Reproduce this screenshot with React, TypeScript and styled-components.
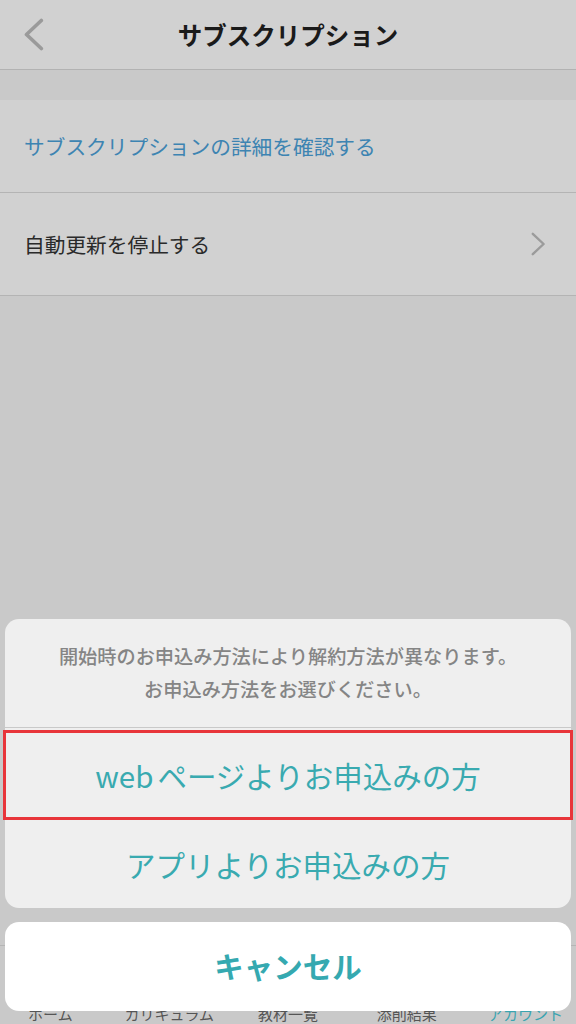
import React from "react";
import styled, { createGlobalStyle } from "styled-components";

const GlobalStyle = createGlobalStyle`
  html, body {
    margin: 0;
    padding: 0;
    background: #c9c9c9;
  }
  body {
    font-family: "Noto Sans CJK JP", "Noto Sans", sans-serif;
  }
  * {
    box-sizing: border-box;
  }
`;

const Screen = styled.div`
  position: relative;
  width: 576px;
  height: 1024px;
  overflow: hidden;
  display: flex;
  flex-direction: column;
  background: #c9c9c9;
`;

const Header = styled.header`
  height: 70px;
  display: grid;
  grid-template-columns: 70px 1fr 70px;
  align-items: center;
  background: #d1d1d1;
  border-bottom: 1px solid #b2b2b2;
`;

const BackButton = styled.div`
  display: flex;
  align-items: center;
  padding-left: 24px;
  color: #9c9c9c;
`;

const Title = styled.h1`
  margin: 0;
  text-align: center;
  font-size: 24.5px;
  font-weight: 700;
  color: #1a1a1a;
`;

const List = styled.div`
  margin-top: 30px;
  background: #d1d1d1;
`;

const Row = styled.div<{ $h: number }>`
  height: ${(p) => p.$h}px;
  display: flex;
  align-items: center;
  justify-content: space-between;
  padding: 0 31px 0 24px;
  border-bottom: 1px solid #b4b4b4;
`;

const RowText = styled.span<{ $link?: boolean }>`
  font-size: 20.7px;
  color: ${(p) => (p.$link ? "#3d84b2" : "#2a2a2a")};
`;

const Filler = styled.div`
  flex: 1;
`;

const TabBar = styled.nav`
  height: 79px;
  border-top: 1px solid #b5b5b5;
  display: grid;
  grid-template-columns: repeat(5, 1fr);
  margin: 0 -9px;
  align-items: end;
`;

const TabLabel = styled.span<{ $active?: boolean }>`
  text-align: center;
  font-size: 15px;
  line-height: 20px;
  color: ${(p) => (p.$active ? "#3aa4b0" : "#555")};
`;

const Sheet = styled.div`
  position: absolute;
  left: 5px;
  right: 5px;
  bottom: 13px;
  display: flex;
  flex-direction: column;
  gap: 14px;
`;

const Group = styled.div`
  background: #efefef;
  border-radius: 14px;
`;

const Message = styled.div`
  padding: 21px 10px 21px;
  text-align: center;
  font-size: 19.2px;
  font-weight: 500;
  line-height: 33px;
  color: #858585;
  border-bottom: 1px solid #c9c9c9;
`;

const Option = styled.div<{ $selected?: boolean; $h: number }>`
  height: ${(p) => p.$h}px;
  display: flex;
  align-items: center;
  justify-content: center;
  font-size: 29.5px;
  color: #39aab0;
  ${(p) =>
    p.$selected &&
    `
    margin: 2px -2px 0 -2px;
    border: 3px solid #e8353a;
  `}
`;

const Latin = styled.span`
  margin-right: 4px;
`;

const Cancel = styled.div`
  height: 89px;
  display: flex;
  align-items: center;
  justify-content: center;
  padding-bottom: 3px;
  background: #ffffff;
  border-radius: 14px;
  font-size: 29.5px;
  font-weight: 700;
  color: #35a9b0;
`;

const Chevron = ({ dir, size, color, stroke }: { dir: "left" | "right"; size: number; color: string; stroke: number }) => (
  <svg width={size * 0.6} height={size} viewBox="0 0 12 20" fill="none">
    <path
      d={dir === "left" ? "M10.5 1.5 L1.5 10 L10.5 18.5" : "M1.5 1.5 L10.5 10 L1.5 18.5"}
      stroke={color}
      strokeWidth={stroke}
      strokeLinecap="round"
      strokeLinejoin="round"
    />
  </svg>
);

export default function App() {
  return (
    <>
      <GlobalStyle />
      <Screen>
        <Header>
          <BackButton>
            <Chevron dir="left" size={33} color="#9a9a9a" stroke={2.2} />
          </BackButton>
          <Title>サブスクリプション</Title>
          <div />
        </Header>
        <List>
          <Row $h={93}>
            <RowText $link>サブスクリプションの詳細を確認する</RowText>
          </Row>
          <Row $h={103}>
            <RowText>自動更新を停止する</RowText>
            <Chevron dir="right" size={24} color="#9b9b9b" stroke={2} />
          </Row>
        </List>
        <Filler />
        <TabBar>
          <TabLabel>ホーム</TabLabel>
          <TabLabel>カリキュラム</TabLabel>
          <TabLabel>教材一覧</TabLabel>
          <TabLabel>添削結果</TabLabel>
          <TabLabel $active>アカウント</TabLabel>
        </TabBar>
        <Sheet>
          <Group>
            <Message>
              開始時のお申込み方法により解約方法が異なります。
              <br />
              お申込み方法をお選びください。
            </Message>
            <Option $selected $h={90}>
              <Latin>web</Latin>ページよりお申込みの方
            </Option>
            <Option $h={88}>アプリよりお申込みの方</Option>
          </Group>
          <Cancel>キャンセル</Cancel>
        </Sheet>
      </Screen>
    </>
  );
}
